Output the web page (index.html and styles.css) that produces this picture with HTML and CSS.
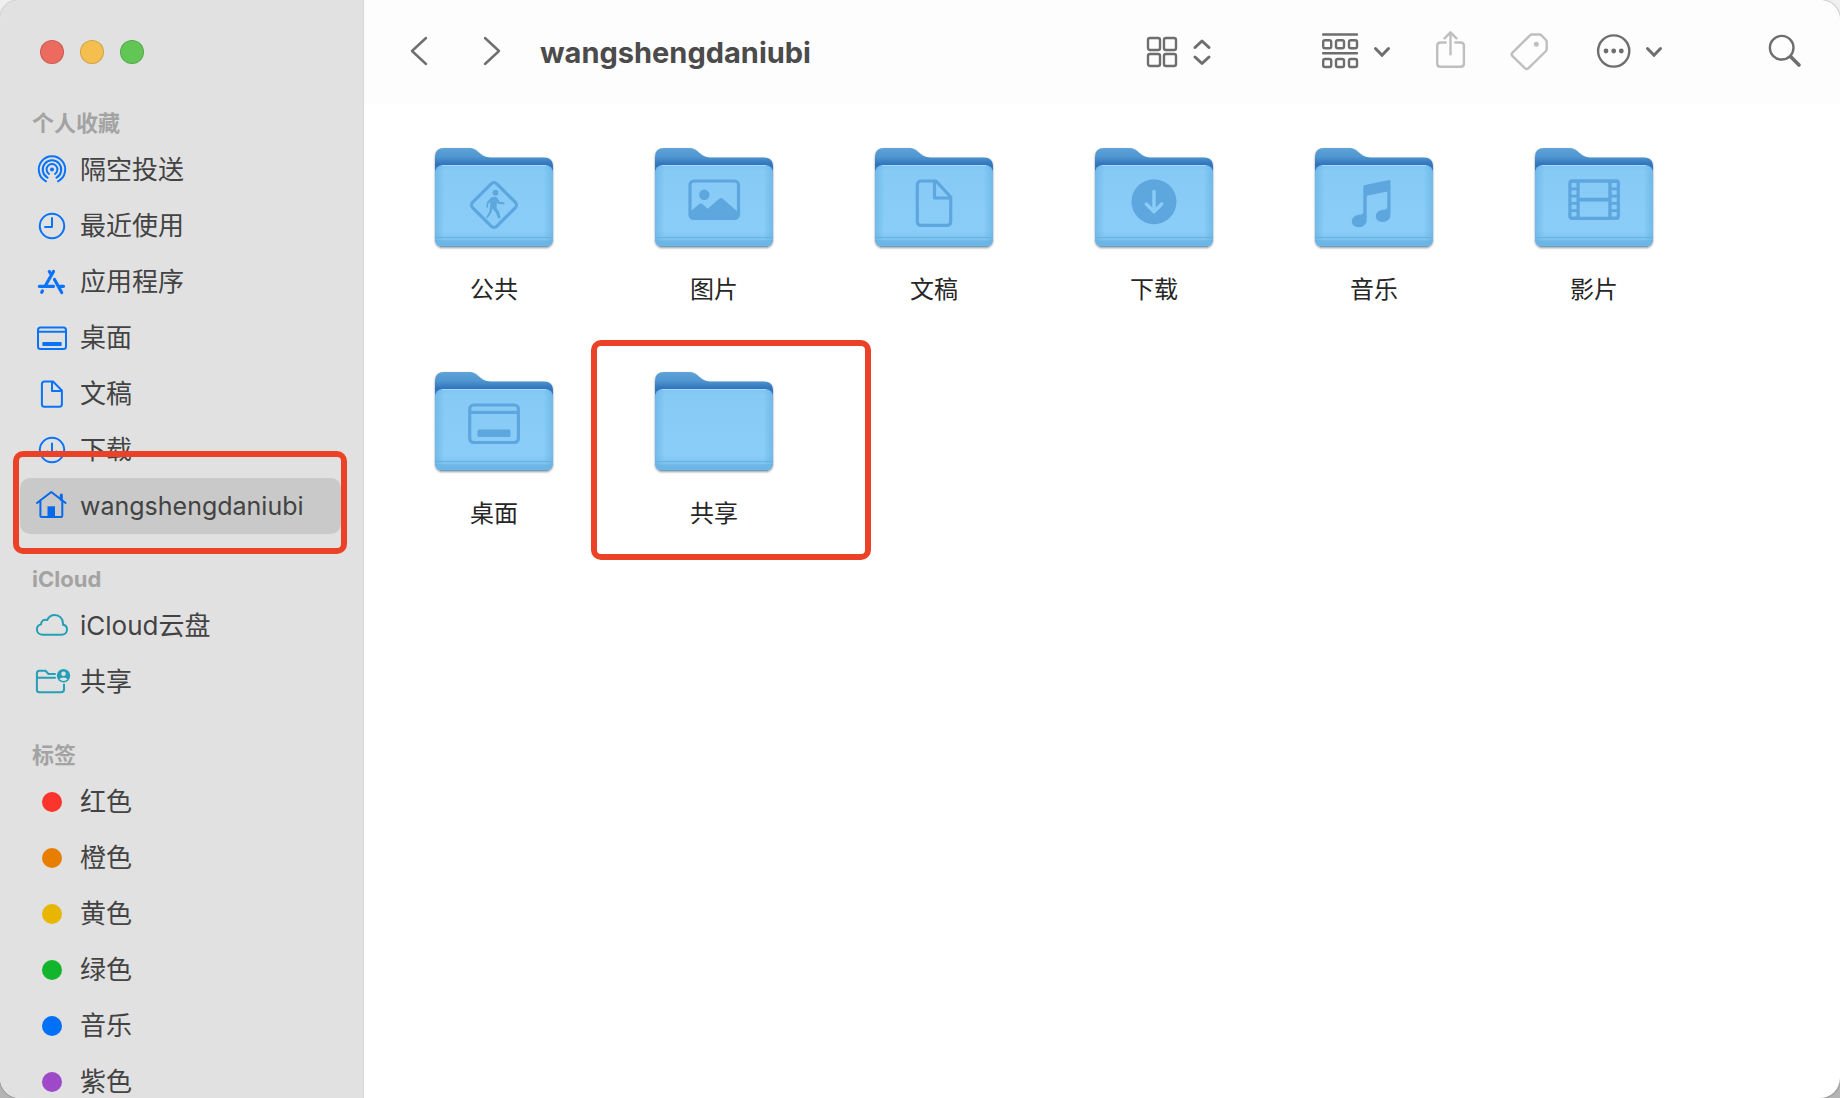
FILE: index.html
```html
<!DOCTYPE html>
<html lang="zh-CN">
<head>
  <meta charset="UTF-8">
  <meta name="viewport" content="width=device-width, initial-scale=1.0">
  <title>wangshengdaniubi</title>
  <link rel="stylesheet" href="styles.css">
</head>
<body>
  <!-- Shared folder shape -->
  <svg class="defs" width="0" height="0" aria-hidden="true">
    <defs>
      <linearGradient id="back" x1="0" y1="0" x2="0" y2="1">
        <stop offset="0" stop-color="#5ea3d8"/>
        <stop offset="0.1" stop-color="#4f97d0"/>
        <stop offset="0.19" stop-color="#3274bd"/>
        <stop offset="1" stop-color="#3274bd"/>
      </linearGradient>
      <linearGradient id="front" x1="0" y1="0" x2="0" y2="1">
        <stop offset="0" stop-color="#7fc5f1"/>
        <stop offset="0.08" stop-color="#87caf6"/>
        <stop offset="0.8" stop-color="#8acdf8"/>
        <stop offset="1" stop-color="#76bdea"/>
      </linearGradient>
      <linearGradient id="sides" x1="0" y1="0" x2="1" y2="0">
        <stop offset="0" stop-color="#5faee0" stop-opacity="0.6"/>
        <stop offset="0.08" stop-color="#5faee0" stop-opacity="0"/>
        <stop offset="0.92" stop-color="#5faee0" stop-opacity="0"/>
        <stop offset="1" stop-color="#5faee0" stop-opacity="0.6"/>
      </linearGradient>
      <symbol id="folder" viewBox="0 0 128 108">
        <path d="M5 90V13Q5 4 14 4H40C48 4 50 13.500 60 13.500H114Q123 13.500 123 22V90Z" fill="url(#back)"/>
        <rect x="5" y="21" width="118" height="82" rx="8" fill="url(#front)"/>
        <rect x="5" y="21" width="118" height="82" rx="8" fill="url(#sides)"/>
        <path d="M12 21.500H116" stroke="#a5d9fa" stroke-width="1"/>
        <path d="M5 93.500H123M5 97H123" stroke="#66b1e1" stroke-width="1.200"/>
        <path d="M5.500 97.600H122.500Q121.500 103 115 103H13Q6.500 103 5.500 97.600Z" fill="#6db5e5"/>
        <path d="M10 102.500H118" stroke="#66a3cc" stroke-width="1"/>
      </symbol>
    </defs>
  </svg>

  <div class="window">
    <aside class="sidebar">
      <div class="lights">
        <button class="light red" aria-label="关闭"></button>
        <button class="light yellow" aria-label="最小化"></button>
        <button class="light green" aria-label="缩放"></button>
      </div>

      <nav>
        <h2>个人收藏</h2>
        <ul>
          <li><a href="#">
            <svg class="icon" viewBox="0 0 32 32">
              <circle cx="16" cy="15.500" r="2" fill="currentColor" stroke="none"/>
              <path d="M13 20A5.400 5.400 0 1 1 19 20M11.500 23.700A9.300 9.300 0 1 1 20.500 23.700M10 27.300A13.200 13.200 0 1 1 22 27.300"/>
            </svg>隔空投送</a></li>
          <li><a href="#">
            <svg class="icon" viewBox="0 0 32 32"><circle cx="16" cy="16" r="12.200"/><path d="M16 8V17H9"/></svg>最近使用</a></li>
          <li><a href="#">
            <svg class="icon" viewBox="0 0 32 32">
              <path stroke-width="3.200" d="M17.500 5.500L9.500 19.500M13.300 5.500L15.500 9M18.500 13.500L25.700 26.500M3.300 20.300H17.500M24 20.300H27.500M6.500 24.800L5.700 26.300"/>
            </svg>应用程序</a></li>
          <li><a href="#">
            <svg class="icon" viewBox="0 0 32 32"><rect x="2" y="5.500" width="28" height="21.500" rx="2.500"/><path d="M2 9.700H30"/><rect x="6.300" y="20" width="19.400" height="4" rx="1" fill="currentColor" stroke="none"/></svg>桌面</a></li>
          <li><a href="#">
            <svg class="icon" viewBox="0 0 32 32"><path d="M17 3.500H8.500Q5.900 3.500 5.900 6.100V26.200Q5.900 28.800 8.500 28.800H23.300Q25.900 28.800 25.900 26.200V12.500ZM16 3.500V13H25.900"/></svg>文稿</a></li>
          <li><a href="#">
            <svg class="icon" viewBox="0 0 32 32"><circle cx="16" cy="16" r="12.200"/><path d="M16 9.500V22M11.500 17.500L16 22L20.500 17.500"/></svg>下载</a></li>
          <li class="marked"><a href="#" class="selected" aria-current="page">
            <svg class="icon" viewBox="0 0 32 32"><path d="M1 13L15.300 2L29.600 13M4.400 11.500V25.500Q4.400 27 6 27H24.800Q26.300 27 26.300 25.500V11.500"/><path d="M25.300 5V9.500" stroke-width="3"/><rect x="11.500" y="16.300" width="7.500" height="11" fill="currentColor" stroke="none"/></svg>wangshengdaniubi</a></li>
        </ul>

        <h2>iCloud</h2>
        <ul class="teal">
          <li><a href="#">
            <svg class="icon" viewBox="0 0 32 32"><path d="M7 24.800C3.500 24.800 0.900 22.500 0.900 19.400C0.900 17 2.600 15 5 14.400C5 11 8 9 11.200 10C12.600 6.800 15.500 4.900 18.700 4.900C23.500 4.900 27 8.500 27 13.600V14.700C29.500 15 31 17 31 19.600C31 22.500 28.700 24.800 25.500 24.800Z"/></svg>iCloud云盘</a></li>
          <li><a href="#">
            <svg class="icon" viewBox="0 0 32 32"><path d="M19 8H12.500L9.500 4.800H3.500Q0.900 4.800 0.900 7.400V23.700Q0.900 26.300 3.500 26.300H25Q28 26.300 28 23.500V18.500M0.900 11.700H19"/><circle cx="27.500" cy="9.700" r="6.700" fill="currentColor" stroke="none"/><circle cx="27.500" cy="7.800" r="2.300" fill="#e1e1e1" stroke="none"/><path d="M23.500 13.200Q24.500 11.400 27.500 11.400T31.500 13.200Q30 15 27.500 15T23.500 13.200Z" fill="#e1e1e1" stroke="none"/></svg>共享</a></li>
        </ul>

        <h2>标签</h2>
        <ul>
          <li><a href="#"><span class="dot red"></span>红色</a></li>
          <li><a href="#"><span class="dot orange"></span>橙色</a></li>
          <li><a href="#"><span class="dot yellow"></span>黄色</a></li>
          <li><a href="#"><span class="dot green"></span>绿色</a></li>
          <li><a href="#"><span class="dot blue"></span>音乐</a></li>
          <li><a href="#"><span class="dot purple"></span>紫色</a></li>
        </ul>
      </nav>
    </aside>

    <main class="main">
      <header class="toolbar">
        <div class="history">
          <button aria-label="后退"><svg width="20" height="44"><path d="M16 8L2 21L16 34"/></svg></button>
          <button aria-label="前进"><svg width="20" height="44"><path d="M3 8L17 21L3 34"/></svg></button>
        </div>
        <h1>wangshengdaniubi</h1>
        <button aria-label="显示方式">
          <svg width="66" height="44">
            <rect x="2" y="8" width="12" height="12" rx="2"/><rect x="18" y="8" width="12" height="12" rx="2"/>
            <rect x="2" y="24" width="12" height="12" rx="2"/><rect x="18" y="24" width="12" height="12" rx="2"/>
            <path stroke-width="3" d="M49 17.500L56 11L63 17.500M49 27L56 33.500L63 27"/>
          </svg>
        </button>
        <div class="actions">
          <button aria-label="分组">
            <svg width="70" height="44">
              <path d="M1 4.500H35M1 23.300H35"/>
              <rect x="1.200" y="10.200" width="8" height="8" rx="1.800"/><rect x="14" y="10.200" width="8" height="8" rx="1.800"/><rect x="27" y="10.200" width="8" height="8" rx="1.800"/>
              <rect x="1.200" y="29" width="8" height="8" rx="1.800"/><rect x="14" y="29" width="8" height="8" rx="1.800"/><rect x="27" y="29" width="8" height="8" rx="1.800"/>
              <path stroke-width="3" d="M53.500 18.500L60 25.300L66.500 18.500"/>
            </svg>
          </button>
          <button aria-label="共享" disabled>
            <svg width="30" height="44"><path d="M9.700 12.500H4.500Q1.200 12.500 1.200 15.800V33.400Q1.200 36.700 4.500 36.700H24.600Q27.900 36.700 27.900 33.400V15.800Q27.900 12.500 24.600 12.500H19.300M14.500 24.300V2.500M8.500 8.300L14.500 2.300L20.500 8.300"/></svg>
          </button>
          <button aria-label="标签" disabled>
            <svg width="40" height="44"><path d="M22 4.500H29.500Q30.500 4.500 31.200 5.200L36 10Q36.700 10.700 36.700 11.700V19.500Q36.700 20.300 36 21L18.500 38.200Q16.700 40 14.900 38.200L2.500 26.200Q0.800 24.400 2.500 22.600L20 5.300Q20.800 4.500 22 4.500Z"/><circle cx="26.300" cy="14.300" r="2.500" class="solid"/></svg>
          </button>
          <button aria-label="更多">
            <svg width="70" height="44"><circle cx="19.700" cy="21" r="15.600"/><circle cx="12" cy="21" r="2.400" class="solid"/><circle cx="19.700" cy="21" r="2.400" class="solid"/><circle cx="27.300" cy="21" r="2.400" class="solid"/><path stroke-width="3" d="M53.500 18.500L60 25.300L66.500 18.500"/></svg>
          </button>
        </div>
        <button aria-label="搜索">
          <svg width="36" height="44"><circle cx="13.700" cy="17.700" r="11.800"/><path stroke-width="3.600" d="M23 27L31 35"/></svg>
        </button>
      </header>

      <ul class="files">
        <li><a href="#">
          <svg class="folder" viewBox="0 0 128 108"><use href="#folder"/>
            <rect class="line" x="47" y="44" width="34" height="34" rx="4" transform="rotate(45 64 61)"/>
            <circle class="fill" cx="65.500" cy="48.700" r="2.900"/>
            <path class="fill" d="M61.500 53.200L65.500 52.800Q67.300 53 68 55L69.500 57.800L74 58.200Q75.200 59.300 74 60.300L68.500 60L67 58.300L66.500 64L69 67.500L70.500 73.500Q69.500 75.200 68 74L65.800 68.500L62 64.500L61.500 68.500L57.500 74.200Q56 74.700 56.300 73L59.500 67.500L60.500 58L58.500 59.500L58 63.300Q56.700 64.400 56.200 63L57 58Z"/>
          </svg>
          <span>公共</span></a></li>
        <li><a href="#">
          <svg class="folder" viewBox="0 0 128 108"><use href="#folder"/>
            <rect class="line" x="40" y="37" width="48.500" height="37.500" rx="4"/>
            <circle class="fill" cx="54.300" cy="50.700" r="5.200"/>
            <path class="fill" d="M40 68L49.500 59.800Q50.700 59 52 59.800L57.700 64.700L69.500 54.600Q71 53.600 72.500 54.600L88 68V75H40Z"/>
          </svg>
          <span>图片</span></a></li>
        <li><a href="#">
          <svg class="folder" viewBox="0 0 128 108"><use href="#folder"/>
            <path class="line" d="M66 37H51.500Q47.300 37 47.300 41.200V77.200Q47.300 81.400 51.500 81.400H76.500Q80.700 81.400 80.700 77.200V53ZM64.500 37V54H80.700"/>
          </svg>
          <span>文稿</span></a></li>
        <li><a href="#">
          <svg class="folder" viewBox="0 0 128 108"><use href="#folder"/>
            <circle class="fill" cx="64" cy="57.700" r="22.500"/>
            <path class="cut" d="M64 47.500V67.500M56.300 60L64 67.700L71.700 60"/>
          </svg>
          <span>下载</span></a></li>
        <li><a href="#">
          <svg class="folder" viewBox="0 0 128 108"><use href="#folder"/>
            <path class="fill" d="M53.300 43Q53.300 41.300 55 40.900L79 36Q80.500 35.700 80.500 37.300V71C80.500 75 77 78 72.500 78C68.500 78 65.800 75.500 65.800 72.300C65.800 68.500 69 66.300 73 65.800C76 65.500 77.300 65 77.300 63V47.500L56.700 51.800V76C56.700 80 53.500 83.200 48.800 83.200C44.500 83.200 41.800 80.700 41.800 77.300C41.800 73.500 45 71.300 49 70.800C52.200 70.500 53.300 69.800 53.300 68Z"/>
          </svg>
          <span>音乐</span></a></li>
        <li><a href="#">
          <svg class="folder" viewBox="0 0 128 108"><use href="#folder"/>
            <path class="fill" fill-rule="evenodd" d="M42 35.300H86.300Q90 35.300 90 39V72.300Q90 76 86.300 76H42Q38.300 76 38.300 72.300V39Q38.300 35.300 42 35.300ZM49.700 38.700V53.700H78.300V38.700ZM49.700 57.500V72.700H78.300V57.500ZM41.500 39V43.500H46.500V39ZM41.500 46.200V50.700H46.500V46.200ZM41.500 53.500V58H46.500V53.500ZM41.500 60.700V65.200H46.500V60.700ZM41.500 68V72.500H46.500V68ZM81.700 39V43.500H86.700V39ZM81.700 46.200V50.700H86.700V46.200ZM81.700 53.500V58H86.700V53.500ZM81.700 60.700V65.200H86.700V60.700ZM81.700 68V72.500H86.700V68Z"/>
          </svg>
          <span>影片</span></a></li>
        <li><a href="#">
          <svg class="folder" viewBox="0 0 128 108"><use href="#folder"/>
            <rect class="line" x="39.700" y="37" width="48.700" height="37.500" rx="4"/>
            <path class="line" d="M40 44.300H88"/>
            <rect class="fill" x="47.500" y="61.500" width="33" height="7.500" rx="1.500"/>
          </svg>
          <span>桌面</span></a></li>
        <li class="marked"><a href="#">
          <svg class="folder" viewBox="0 0 128 108"><use href="#folder"/></svg>
          <span>共享</span></a></li>
      </ul>
    </main>
  </div>
</body>
</html>
```
FILE: styles.css
```css
* {
  box-sizing: border-box;
}
body {
  margin: 0;
  background: linear-gradient(#f0f0f0, #b4b4b4);
  font-family: Inter, "Noto Sans CJK SC", sans-serif;
}
h1, h2, ul {
  margin: 0;
  padding: 0;
}
ul {
  list-style: none;
}
a {
  color: inherit;
  text-decoration: none;
}
button {
  padding: 0;
  border: none;
  background: none;
  color: #6e6e6e;
}
button:disabled {
  color: #bfbfbf;
}
svg {
  display: block;
  flex: none;
}
.defs {
  position: absolute;
}
.window {
  display: flex;
  height: 100vh;
  overflow: hidden;
  border-radius: 20px;
  background: #fff;
  box-shadow: 0 0 2px rgba(0, 0, 0, 0.5);
}

/* Sidebar */
.sidebar {
  flex: none;
  width: 364px;
  padding: 0 22px 0 20px;
  background: #e1e1e1;
  border-right: 1px solid #d6d6d6;
}
.lights {
  display: flex;
  gap: 16px;
  padding: 40px 20px;
}
.light {
  width: 24px;
  height: 24px;
  border: 1px solid rgba(0, 0, 0, 0.15);
  border-radius: 50%;
}
.light.red { background: #ed6a5f; }
.light.yellow { background: #f5bf4f; }
.light.green { background: #62c655; }

.sidebar h2 {
  padding-left: 12px;
  color: #a3a3a3;
  font-size: 22px;
  font-weight: 700;
  line-height: 38px;
}
.sidebar ul + h2 {
  margin-top: 26px;
}
.sidebar a {
  display: flex;
  align-items: center;
  gap: 12px;
  height: 56px;
  padding-left: 16px;
  border-radius: 10px;
  color: #434343;
  font-size: 26px;
  line-height: 32px;
  white-space: nowrap;
}
.sidebar a.selected {
  background: #c9c9c9;
  font-size: 25px;
}
.icon {
  width: 32px;
  height: 32px;
  overflow: visible;
  color: #0a74f9;
  fill: none;
  stroke: currentColor;
  stroke-width: 2;
  stroke-linecap: round;
  stroke-linejoin: round;
}
.selected .icon {
  color: #0668ea;
}
.teal .icon {
  color: #249fb8;
}
.dot {
  width: 20px;
  height: 20px;
  margin: 0 6px;
  border-radius: 50%;
}
.dot.red { background: #fb352b; }
.dot.orange { background: #e87e00; }
.dot.yellow { background: #e8b500; }
.dot.green { background: #12b52b; }
.dot.blue { background: #0070f8; }
.dot.purple { background: #9d49c8; }

/* Toolbar */
.main {
  flex: 1;
  min-width: 0;
}
.toolbar {
  display: flex;
  align-items: center;
  height: 104px;
  padding: 0 36px 0 46px;
  background: #fdfdfd;
}
.toolbar svg {
  fill: none;
  stroke: currentColor;
  stroke-width: 2.4;
  stroke-linecap: round;
  stroke-linejoin: round;
}
.toolbar .solid {
  fill: currentColor;
  stroke: none;
}
.history {
  display: flex;
  gap: 52px;
}
.toolbar h1 {
  flex: 1;
  padding-left: 38px;
  color: #4b4b4b;
  font-size: 29px;
  font-weight: 700;
}
.actions {
  display: flex;
  gap: 44px;
  margin: 0 104px 0 110px;
}

/* Files */
.files {
  display: grid;
  grid-template-columns: repeat(auto-fill, 220px);
  grid-auto-rows: 224px;
  padding: 40px 20px;
}
.files a {
  display: flex;
  flex-direction: column;
  align-items: center;
  gap: 20px;
  color: #262626;
  font-size: 24px;
  line-height: 36px;
}
.folder {
  width: 128px;
  height: 108px;
  filter: drop-shadow(0 1px 1px rgba(0, 0, 0, 0.4));
}
.folder .fill {
  fill: #5da6de;
}
.folder .line {
  fill: none;
  stroke: #5da6de;
  stroke-width: 3.2;
  stroke-linejoin: round;
}
.folder .cut {
  fill: none;
  stroke: #8acdf8;
  stroke-width: 3.4;
  stroke-linecap: round;
  stroke-linejoin: round;
}

/* Red highlight frames */
.marked {
  position: relative;
}
.marked::after {
  content: "";
  position: absolute;
  border: 6px solid #eb4127;
  border-radius: 10px;
  pointer-events: none;
}
.sidebar .marked::after {
  inset: -27px -6px -20px -7px;
}
.files .marked::after {
  inset: -28px -47px 32px -13px;
}
```
